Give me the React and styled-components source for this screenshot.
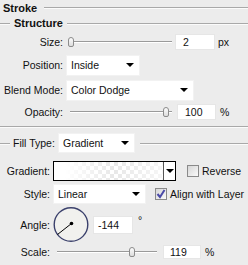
import React from "react";
import styled, { createGlobalStyle } from "styled-components";

const Global = createGlobalStyle`
  body {
    margin: 0;
    background: #ececec;
  }
`;

const Panel = styled.div`
  width: 248px;
  height: 265px;
  overflow: hidden;
  background: #ececec;
  font-family: "Liberation Sans", Arial, sans-serif;
  font-size: 10.5px;
  color: #111;
  display: flex;
  flex-direction: column;
`;

const Title = styled.div`
  display: flex;
  align-items: center;
  height: 15px;
  padding-left: 3px;
  gap: 7px;
  font-weight: bold;
  font-size: 11px;
`;

const Rule = styled.div`
  flex: ${(p) => (p.$w ? "none" : 1)};
  width: ${(p) => (p.$w ? `${p.$w}px` : "auto")};
  height: 1px;
  background: #a9a9a9;
  box-shadow: 0 1px 0 #fbfbfb;
`;

const Legend = styled.div`
  display: flex;
  align-items: center;
  height: 16px;
  font-weight: bold;
  font-size: 11px;
  gap: ${(p) => p.$gap || 4}px;
`;

const Separator = styled.div`
  height: 1px;
  margin-top: 5px;
  background: #a9a9a9;
  box-shadow: 0 1px 0 #fbfbfb;
`;

const Row = styled.div`
  display: flex;
  align-items: center;
  height: ${(p) => p.$h}px;
  margin-top: ${(p) => p.$mt || 0}px;
  flex-shrink: 0;
`;

const Label = styled.span`
  width: ${(p) => p.$w}px;
  margin-right: ${(p) => p.$gap}px;
  text-align: right;
  flex-shrink: 0;
  white-space: nowrap;
`;

const Text = styled.span`
  margin-left: ${(p) => p.$ml || 0}px;
  margin-right: ${(p) => p.$mr || 0}px;
  white-space: nowrap;
  align-self: ${(p) => (p.$top ? "flex-start" : "center")};
  margin-top: ${(p) => (p.$top ? "8px" : 0)};
`;

const Select = styled.div`
  width: ${(p) => p.$w}px;
  height: ${(p) => p.$h || 21}px;
  box-sizing: border-box;
  background: #fff;
  border: 1px solid #f2f2f2;
  display: flex;
  align-items: center;
  justify-content: space-between;
  padding: 0 5px 0 4px;
  flex-shrink: 0;
`;

const Arrow = styled.span`
  width: 0;
  height: 0;
  border-left: 4px solid transparent;
  border-right: 4px solid transparent;
  border-top: 4px solid #000;
`;

const Field = styled.div`
  width: ${(p) => p.$w}px;
  height: ${(p) => p.$h || 16}px;
  margin-left: ${(p) => p.$ml || 0}px;
  box-sizing: border-box;
  background: #fff;
  border: 1px solid #e6e6e6;
  padding-left: ${(p) => p.$pad || 6}px;
  display: flex;
  align-items: center;
  flex-shrink: 0;
`;

const Track = styled.div`
  position: relative;
  width: ${(p) => p.$w}px;
  height: 12px;
  flex-shrink: 0;
  &::before {
    content: "";
    position: absolute;
    left: 0;
    right: 0;
    top: 5px;
    height: 1px;
    background: #9a9a9a;
    box-shadow: 0 1px 0 #fff;
  }
`;

const Thumb = styled.div`
  position: absolute;
  top: 1px;
  width: 6px;
  height: 10px;
  box-sizing: border-box;
  border: 1px solid #8c8c8c;
  border-radius: 3px 3px 2px 2px;
  background: linear-gradient(#fdfdfd, #dcdcdc);
`;

const Slider = ({ w, pos }) => (
  <Track $w={w}>
    <Thumb style={{ left: Math.round(pos * (w - 6)) }} />
  </Track>
);

const GradientBox = styled.div`
  width: 123px;
  height: 20px;
  box-sizing: border-box;
  border: 1px solid #000;
  display: flex;
  flex-shrink: 0;
`;

const Swatch = styled.div`
  flex: 1;
  background-color: #fff;
  background-image: linear-gradient(to right, #fff 10%, rgba(255, 255, 255, 0.2) 55%, rgba(255, 255, 255, 0.7) 100%),
    linear-gradient(45deg, #e2e2e2 25%, transparent 25%, transparent 75%, #e2e2e2 75%),
    linear-gradient(45deg, #e2e2e2 25%, transparent 25%, transparent 75%, #e2e2e2 75%);
  background-size: 100% 100%, 8px 8px, 8px 8px;
  background-position: 0 0, 0 0, 4px 4px;
`;

const DropCell = styled.div`
  width: 11px;
  border-left: 1px solid #555;
  background: #fff;
  display: flex;
  align-items: center;
  justify-content: center;
`;

const Check = styled.div`
  width: 12px;
  height: 12px;
  box-sizing: border-box;
  margin-left: ${(p) => p.$ml}px;
  margin-right: 3px;
  border: 1px solid #8a8a8a;
  background: linear-gradient(135deg, #d6d6d6, #fafafa);
  display: flex;
  align-items: center;
  justify-content: center;
  flex-shrink: 0;
`;

const Dial = () => (
  <svg width="36" height="37" viewBox="0 0 36 37" style={{ flexShrink: 0 }}>
    <circle cx="18" cy="18.5" r="16.8" fill="#f1f1ee" stroke="#3b416c" strokeWidth="1.4" />
    <line x1="18.5" y1="17.5" x2="4.5" y2="28.5" stroke="#000" strokeWidth="1" />
    <circle cx="18.5" cy="17.5" r="1.8" fill="#000" />
  </svg>
);

const Tick = () => (
  <svg width="10" height="10" viewBox="0 0 10 10">
    <path d="M1.5 5 L4 8 L8.5 1" fill="none" stroke="#4a4aa8" strokeWidth="2" />
  </svg>
);

export default function App() {
  return (
    <Panel>
      <Global />
      <Title>
        Stroke
        <Rule />
      </Title>
      <Legend>
        <Rule $w={10} />
        Structure
        <Rule />
      </Legend>

      <Row $h={20} $mt={1}>
        <Label $w={63} $gap={5}>Size:</Label>
        <Slider w={104} pos={0} />
        <Field $w={40} $ml={3} $pad={7}>2</Field>
        <Text $ml={3}>px</Text>
      </Row>
      <Row $h={22} $mt={2}>
        <Label $w={63} $gap={3}>Position:</Label>
        <Select $w={74}>
          Inside
          <Arrow />
        </Select>
      </Row>
      <Row $h={22} $mt={3}>
        <Label $w={63} $gap={3}>Blend Mode:</Label>
        <Select $w={128}>
          Color Dodge
          <Arrow />
        </Select>
      </Row>
      <Row $h={18} $mt={2}>
        <Label $w={63} $gap={7}>Opacity:</Label>
        <Slider w={102} pos={0.97} />
        <Field $w={39} $ml={5} $pad={7}>100</Field>
        <Text $ml={4}>%</Text>
      </Row>

      <Separator />

      <Row $h={20} $mt={6}>
        <Rule $w={10} />
        <Label $w={40} $gap={5} style={{ marginLeft: 3 }}>Fill Type:</Label>
        <Select $w={77} $h={20}>
          Gradient
          <Arrow />
        </Select>
        <Rule style={{ marginLeft: 5 }} />
      </Row>
      <Row $h={20} $mt={8}>
        <Label $w={50} $gap={3}>Gradient:</Label>
        <GradientBox>
          <Swatch />
          <DropCell>
            <Arrow />
          </DropCell>
        </GradientBox>
        <Check $ml={11} />
        Reverse
      </Row>
      <Row $h={20} $mt={3}>
        <Label $w={50} $gap={3}>Style:</Label>
        <Select $w={93} $h={20}>
          Linear
          <Arrow />
        </Select>
        <Check $ml={9}>
          <Tick />
        </Check>
        Align with Layer
      </Row>
      <Row $h={37} $mt={2}>
        <Label $w={50} $gap={3}>Angle:</Label>
        <Dial />
        <Field $w={40} $h={18} $ml={4} $pad={4}>-144</Field>
        <Text $ml={5} $top>°</Text>
      </Row>
      <Row $h={14} $mt={2}>
        <Label $w={50} $gap={7}>Scale:</Label>
        <Slider w={100} pos={0.77} />
        <Field $w={38} $h={14} $ml={6}>119</Field>
        <Text $ml={4}>%</Text>
      </Row>
    </Panel>
  );
}
